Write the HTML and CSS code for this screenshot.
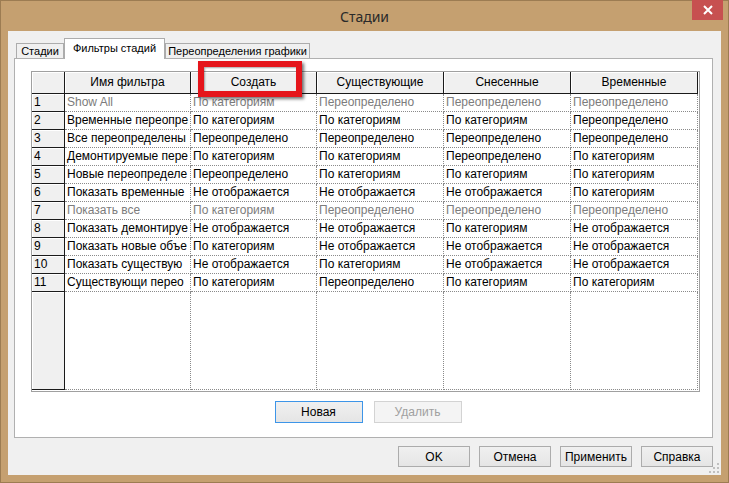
FILE: index.html
```html
<!DOCTYPE html>
<html lang="ru">
<head>
<meta charset="utf-8">
<title>Стадии</title>
<link rel="stylesheet" href="styles.css">
</head>
<body>
<div class="window">
  <div class="titlebar">
    <span class="title">Стадии</span>
    <div class="close">
      <svg width="10" height="10" viewBox="0 0 10 10"><path d="M1 1 L9 9 M9 1 L1 9" stroke="#fff" stroke-width="2" fill="none"/></svg>
    </div>
  </div>
  <div class="client">
    <div class="tabs">
      <div class="tab">Стадии</div>
      <div class="tab active">Фильтры стадий</div>
      <div class="tab wide">Переопределения графики</div>
    </div>
    <div class="panel">
      <div class="frame">
        <div class="grid">
          <div class="hdr corner"></div>
          <div class="hdr">Имя фильтра</div>
          <div class="hdr">Создать</div>
          <div class="hdr">Существующие</div>
          <div class="hdr">Снесенные</div>
          <div class="hdr">Временные</div>

          <div class="num">1</div>
          <div class="cell muted">Show All</div>
          <div class="cell muted">По категориям</div>
          <div class="cell muted">Переопределено</div>
          <div class="cell muted">Переопределено</div>
          <div class="cell muted">Переопределено</div>

          <div class="num">2</div>
          <div class="cell">Временные переопре</div>
          <div class="cell">По категориям</div>
          <div class="cell">По категориям</div>
          <div class="cell">По категориям</div>
          <div class="cell">Переопределено</div>

          <div class="num">3</div>
          <div class="cell">Все переопределены</div>
          <div class="cell">Переопределено</div>
          <div class="cell">Переопределено</div>
          <div class="cell">Переопределено</div>
          <div class="cell">Переопределено</div>

          <div class="num">4</div>
          <div class="cell">Демонтируемые пере</div>
          <div class="cell">По категориям</div>
          <div class="cell">По категориям</div>
          <div class="cell">Переопределено</div>
          <div class="cell">По категориям</div>

          <div class="num">5</div>
          <div class="cell">Новые переопределе</div>
          <div class="cell">Переопределено</div>
          <div class="cell">По категориям</div>
          <div class="cell">По категориям</div>
          <div class="cell">По категориям</div>

          <div class="num">6</div>
          <div class="cell">Показать временные</div>
          <div class="cell">Не отображается</div>
          <div class="cell">Не отображается</div>
          <div class="cell">Не отображается</div>
          <div class="cell">По категориям</div>

          <div class="num">7</div>
          <div class="cell muted">Показать все</div>
          <div class="cell muted">По категориям</div>
          <div class="cell muted">Переопределено</div>
          <div class="cell muted">Переопределено</div>
          <div class="cell muted">Переопределено</div>

          <div class="num">8</div>
          <div class="cell">Показать демонтируе</div>
          <div class="cell">Не отображается</div>
          <div class="cell">Не отображается</div>
          <div class="cell">По категориям</div>
          <div class="cell">Не отображается</div>

          <div class="num">9</div>
          <div class="cell">Показать новые объе</div>
          <div class="cell">По категориям</div>
          <div class="cell">Не отображается</div>
          <div class="cell">Не отображается</div>
          <div class="cell">Не отображается</div>

          <div class="num">10</div>
          <div class="cell">Показать существую</div>
          <div class="cell">Не отображается</div>
          <div class="cell">По категориям</div>
          <div class="cell">Не отображается</div>
          <div class="cell">Не отображается</div>

          <div class="num">11</div>
          <div class="cell">Существующи перео</div>
          <div class="cell">По категориям</div>
          <div class="cell">Переопределено</div>
          <div class="cell">По категориям</div>
          <div class="cell">По категориям</div>

          <div class="num filler"></div>
          <div class="cell filler"></div>
          <div class="cell filler"></div>
          <div class="cell filler"></div>
          <div class="cell filler"></div>
          <div class="cell filler"></div>
        </div>
      </div>
      <div class="actions">
        <button class="btn big primary">Новая</button>
        <button class="btn big disabled">Удалить</button>
      </div>
      <div class="highlight"></div>
    </div>
    <div class="footer">
      <button class="btn">OK</button>
      <button class="btn">Отмена</button>
      <button class="btn">Применить</button>
      <button class="btn">Справка</button>
    </div>
    <svg class="grip" width="12" height="12" viewBox="0 0 12 12">
      <rect x="9" y="1" width="2" height="2" fill="#c0c0c0"/>
      <rect x="5" y="5" width="2" height="2" fill="#c0c0c0"/>
      <rect x="9" y="5" width="2" height="2" fill="#c0c0c0"/>
      <rect x="1" y="9" width="2" height="2" fill="#c0c0c0"/>
      <rect x="5" y="9" width="2" height="2" fill="#c0c0c0"/>
      <rect x="9" y="9" width="2" height="2" fill="#c0c0c0"/>
    </svg>
  </div>
</div>
</body>
</html>
```
FILE: styles.css
```css
* { box-sizing: border-box; }
html, body { margin: 0; padding: 0; }
body {
  width: 729px;
  height: 483px;
  overflow: hidden;
  font-family: "Liberation Sans", Arial, sans-serif;
  font-size: 12px;
  color: #000;
}
.window {
  width: 729px;
  height: 483px;
  background: #c5a070;
  border: 1px solid #9c7c52;
  display: flex;
  flex-direction: column;
}
.titlebar {
  height: 30px;
  display: grid;
  grid-template-columns: 1fr auto 1fr;
  align-items: center;
}
.title {
  grid-column: 2;
  font-family: "Noto Sans", "Open Sans", sans-serif;
  font-size: 14px;
  color: #2a2a2a;
  padding-top: 1px;
}
.close {
  grid-column: 3;
  justify-self: end;
  align-self: start;
  width: 31px;
  height: 20px;
  margin-right: 5px;
  margin-top: -1px;
  background: #c75050;
  display: flex;
  align-items: center;
  justify-content: center;
}
.client {
  position: relative;
  margin: 0 7px;
  height: 444px;
  background: #f0f0f0;
  padding-top: 7px;
}
.tabs {
  display: flex;
  align-items: flex-end;
  height: 20px;
  margin-left: 8px;
  font-size: 11px;
}
.tab {
  width: 48px;
  height: 15px;
  border: 1px solid #acacac;
  border-bottom: none;
  background: #f0f0f0;
  text-align: center;
  line-height: 14px;
  white-space: nowrap;
}
.tab.active {
  width: 101px;
  height: 21px;
  margin-bottom: -1px;
  background: #fff;
  position: relative;
  z-index: 1;
  line-height: 18px;
}
.tab.wide {
  width: 145px;
}
.panel {
  position: relative;
  margin-left: 6px;
  width: 699px;
  height: 380px;
  background: #fff;
  border: 1px solid #b0b0b0;
  padding: 12px 12px 0 16px;
}
.frame {
  width: 669px;
  border: 1px solid #a0a0a0;
  padding-bottom: 1px;
  background: #fff;
}
.grid {
  display: grid;
  grid-template-columns: 33px 126px 126px 127px 127px 127px;
  grid-template-rows: 22px repeat(11, 18px) 98px;
}
.hdr {
  background: #f0f0f0;
  border-right: 1px solid #1a1a1a;
  border-bottom: 1px solid #1a1a1a;
  box-shadow: inset 1px 1px 0 #fff;
  text-align: center;
  line-height: 21px;
  white-space: nowrap;
  overflow: hidden;
}
.num {
  background: #f0f0f0;
  border-right: 1px solid #1a1a1a;
  border-bottom: 1px solid #1a1a1a;
  box-shadow: inset 1px 1px 0 #fff;
  padding-left: 2px;
  line-height: 17px;
}
.cell {
  border-right: 1px dotted #8a8a8a;
  border-bottom: 1px dotted #8a8a8a;
  padding-left: 2px;
  line-height: 17px;
  white-space: nowrap;
  overflow: hidden;
}
.cell.muted { color: #7c7c7c; }
.actions {
  display: flex;
  justify-content: center;
  gap: 11px;
  margin-top: 9px;
  padding-left: 5px;
}
.btn {
  width: 72px;
  height: 21px;
  padding: 0;
  border: 1px solid #acacac;
  background: linear-gradient(#f0f0f0, #e5e5e5);
  font-family: "Liberation Sans", Arial, sans-serif;
  font-size: 12px;
  color: #000;
}
.btn.big {
  width: 88px;
  height: 22px;
}
.btn.primary {
  border-color: #3d95e8;
}
.btn.disabled {
  border-color: #d3d3d3;
  background: #f4f4f4;
  color: #a0a0a0;
}
.highlight {
  position: absolute;
  left: 183px;
  top: 2px;
  width: 104px;
  height: 36px;
  border: 6px solid #e5151b;
  box-shadow: 2px 2px 3px rgba(0, 0, 0, 0.55), inset 1px 1px 2px rgba(0, 0, 0, 0.35);
}
.footer {
  display: flex;
  justify-content: flex-end;
  gap: 9px;
  margin-top: 8px;
  padding-right: 8px;
}
.grip {
  position: absolute;
  right: 1px;
  bottom: 1px;
}
```
